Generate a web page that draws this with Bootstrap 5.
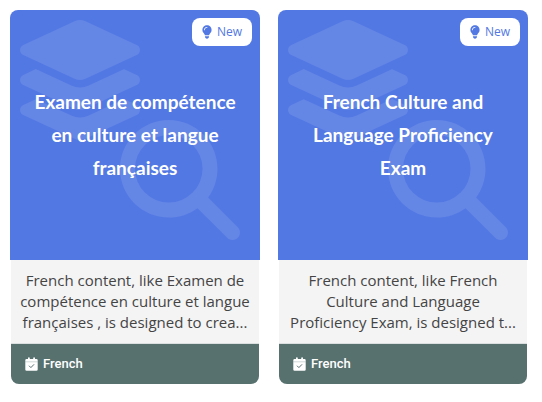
<!DOCTYPE html>
<html lang="en">
<head>
<meta charset="utf-8">
<meta name="viewport" content="width=device-width, initial-scale=1">
<title>French exams</title>
<link href="https://cdn.jsdelivr.net/npm/bootstrap@5.3.0/dist/css/bootstrap.min.css" rel="stylesheet">
<style>
  body { background: #fff; }
  .exam-grid { display: grid; grid-template-columns: 1fr 1fr; gap: 18px; padding: 10px 14px 10px 10px; }
  .exam-cover { min-height: 250px; padding: 0 16px 2px; background: #5278e3; border-radius: 8px 8px 0 0; }
  .exam-art { position: absolute; width: 120px; height: 120px; fill: #fff; opacity: .1; }
  .art-layers { top: 10px; left: 10px; }
  .art-search { right: 20px; bottom: 20px; }
  .exam-new { position: absolute; top: 8px; right: 8px; height: 28px; padding: 0 10px; gap: 5px; border-radius: 8px; background: #fff; color: #5278e3; font: 12px/28px "Open Sans", sans-serif; }
  .exam-title { font: 700 19px/33px Lato, sans-serif; color: #fff; }
  .exam-info { margin: 0 1px; background: #f4f4f4; border-radius: 0 0 8px 8px; }
  .exam-text { padding: 10px 8px; font: 15px/21px "Open Sans", sans-serif; color: #444; }
  .exam-foot { height: 41px; padding: 0 14px; gap: 5px; border-top: 1px solid #dcdfdf; border-radius: 0 0 8px 8px; background: #57716f; color: #fff; font: 500 13px/20px Roboto, sans-serif; }
</style>
</head>
<body>
<svg class="d-none" aria-hidden="true">
  <symbol id="layers" viewBox="32 0 512 512"><path d="M264.5 5.2c14.9-6.9 32.1-6.9 47 0l218.6 101c8.5 3.9 13.9 12.4 13.9 21.8s-5.4 17.9-13.9 21.8l-218.6 101c-14.9 6.9-32.1 6.9-47 0L45.9 149.8C37.4 145.8 32 137.3 32 128s5.4-17.9 13.9-21.8L264.5 5.2zM476.9 209.6l53.2 24.6c8.5 3.9 13.9 12.4 13.9 21.8s-5.4 17.9-13.9 21.8l-218.6 101c-14.9 6.9-32.1 6.9-47 0L45.9 277.8C37.4 273.8 32 265.3 32 256s5.4-17.9 13.9-21.8l53.2-24.6 152 70.2c23.4 10.8 50.4 10.8 73.8 0l152-70.2zm-152 198.2l152-70.2 53.2 24.6c8.5 3.9 13.9 12.4 13.9 21.8s-5.4 17.9-13.9 21.8l-218.6 101c-14.9 6.9-32.1 6.9-47 0L45.9 405.8C37.4 401.8 32 393.3 32 384s5.4-17.9 13.9-21.8l53.2-24.6 152 70.2c23.4 10.8 50.4 10.8 73.8 0z"/></symbol>
  <symbol id="search" viewBox="0 0 512 512"><path d="M416 208c0 45.9-14.9 88.3-40 122.7L502.6 457.4c12.5 12.5 12.5 32.8 0 45.3s-32.8 12.5-45.3 0L330.7 376c-34.4 25.2-76.8 40-122.7 40C93.1 416 0 322.9 0 208S93.1 0 208 0S416 93.1 416 208zM208 352a144 144 0 1 0 0-288 144 144 0 1 0 0 288z"/></symbol>
  <symbol id="bulb" viewBox="0 0 384 512"><path d="M272 384c9.6-31.9 29.5-59.1 49.2-86.2c5.2-7.1 10.4-14.2 15.4-21.4c19.8-28.5 31.4-63 31.4-100.3C368 78.8 289.2 0 192 0S16 78.8 16 176c0 37.3 11.6 71.9 31.4 100.3c5 7.2 10.2 14.3 15.4 21.4c19.8 27.1 39.7 54.4 49.2 86.2H272zM192 512c44.2 0 80-35.8 80-80V416H112v16c0 44.2 35.8 80 80 80zM112 176c0 8.8-7.2 16-16 16s-16-7.2-16-16c0-61.9 50.1-112 112-112c8.8 0 16 7.2 16 16s-7.2 16-16 16c-44.2 0-80 35.8-80 80z"/></symbol>
  <symbol id="calendar" viewBox="0 0 13 14"><path fill="#fff" d="M3 1.2a.9.9 0 0 1 1.8 0V2h3.4v-.8a.9.9 0 0 1 1.8 0V2h1.4q1.3 0 1.3 1.3v9.1q0 1.3-1.3 1.3H1.6Q.3 13.700.3 12.400V3.300Q.3 2 1.600 2H3z"/><path d="M.3 4.800h12.400" stroke="#57716f" stroke-opacity=".35" stroke-width=".8"/><path d="m4.300 9 1.600 1.600 2.900-3" fill="none" stroke="#57716f" stroke-width="1" stroke-linecap="round" stroke-linejoin="round"/></symbol>
</svg>
<main class="exam-grid">
  <article class="d-flex flex-column">
    <div class="exam-cover position-relative d-flex align-items-center justify-content-center text-center">
      <svg class="exam-art art-layers" aria-hidden="true"><use href="#layers"/></svg>
      <svg class="exam-art art-search" aria-hidden="true"><use href="#search"/></svg>
      <span class="exam-new d-flex align-items-center"><svg width="10" height="14" fill="currentColor" aria-hidden="true"><use href="#bulb"/></svg>New</span>
      <h2 class="exam-title position-relative m-0">Examen de compétence en culture et langue françaises</h2>
    </div>
    <div class="exam-info d-flex flex-column flex-grow-1">
      <p class="exam-text m-0 text-center flex-grow-1">French content, like Examen de compétence en culture et langue françaises , is designed to crea...</p>
      <div class="exam-foot d-flex align-items-center"><svg width="13" height="14" aria-hidden="true"><use href="#calendar"/></svg>French</div>
    </div>
  </article>
  <article class="d-flex flex-column">
    <div class="exam-cover position-relative d-flex align-items-center justify-content-center text-center">
      <svg class="exam-art art-layers" aria-hidden="true"><use href="#layers"/></svg>
      <svg class="exam-art art-search" aria-hidden="true"><use href="#search"/></svg>
      <span class="exam-new d-flex align-items-center"><svg width="10" height="14" fill="currentColor" aria-hidden="true"><use href="#bulb"/></svg>New</span>
      <h2 class="exam-title position-relative m-0">French Culture and Language Proficiency Exam</h2>
    </div>
    <div class="exam-info d-flex flex-column flex-grow-1">
      <p class="exam-text m-0 text-center flex-grow-1">French content, like French Culture and Language Proficiency Exam, is designed t...</p>
      <div class="exam-foot d-flex align-items-center"><svg width="13" height="14" aria-hidden="true"><use href="#calendar"/></svg>French</div>
    </div>
  </article>
</main>
<script src="https://cdn.jsdelivr.net/npm/bootstrap@5.3.0/dist/js/bootstrap.bundle.min.js"></script>
</body>
</html>
